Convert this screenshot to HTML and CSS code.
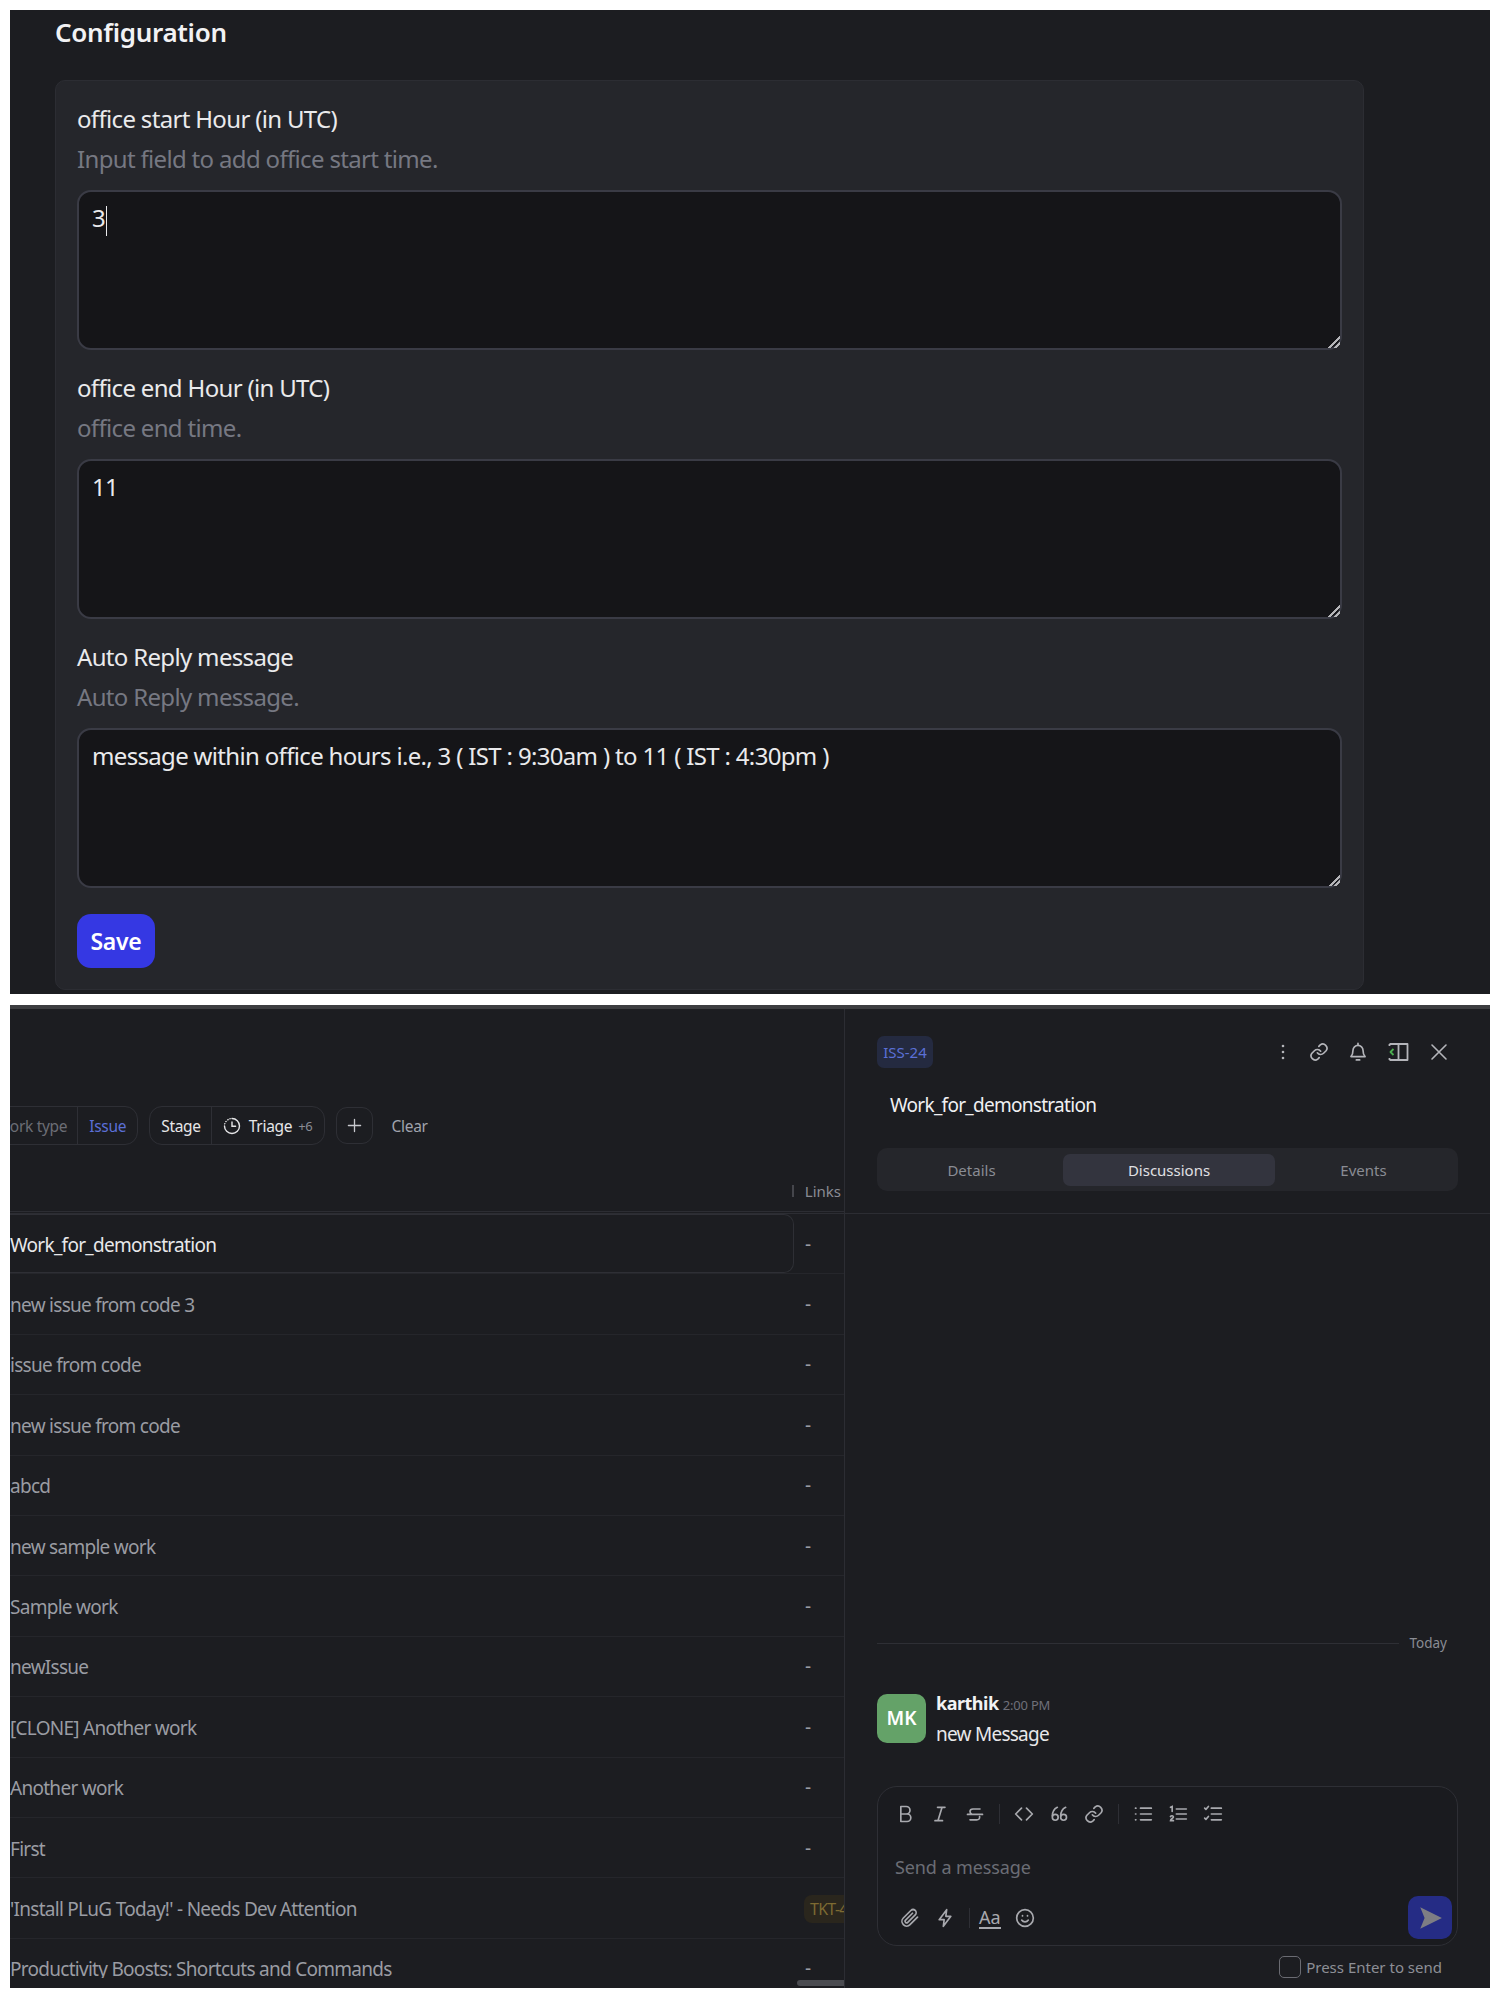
FILE: index.html
```html
<!DOCTYPE html>
<html lang="en">
<head>
    <meta charset="UTF-8">
    <meta name="viewport" content="width=device-width, initial-scale=1.0">
    <title>Configuration</title>
    <link rel="stylesheet" href="styles.css">
</head>
<body>
    <div class="page">
        <section class="config-panel">
            <h1 class="config-title">Configuration</h1>
            <div class="config-card">
                <div class="field">
                    <div class="field-label">office start Hour (in UTC)</div>
                    <div class="field-help">Input field to add office start time.</div>
                    <div class="field-input">3<span class="caret"></span></div>
                </div>
                <div class="field">
                    <div class="field-label">office end Hour (in UTC)</div>
                    <div class="field-help">office end time.</div>
                    <div class="field-input">11</div>
                </div>
                <div class="field">
                    <div class="field-label">Auto Reply message</div>
                    <div class="field-help">Auto Reply message.</div>
                    <div class="field-input">message within office hours i.e., 3 ( IST : 9:30am ) to 11 ( IST : 4:30pm )</div>
                </div>
                <button class="save-button">Save</button>
            </div>
        </section>

        <section class="work-panel">
            <div class="work-list">
                <div class="filter-bar">
                    <div class="filter-pill">
                        <span class="filter-name muted">Work type</span>
                        <span class="filter-value blue">Issue</span>
                    </div>
                    <div class="filter-pill">
                        <span class="filter-name">Stage</span>
                        <span class="filter-value">
                            <svg class="triage-icon" viewBox="0 0 18 18" fill="none" stroke="currentColor" stroke-width="1.4" stroke-linecap="round">
                                <path d="M9 1.5a7.5 7.5 0 1 1-7.5 7.5" />
                                <path d="M1.7 6.9l.1-.3M2.9 4.6l.2-.2M4.8 2.8l.3-.2M6.9 1.8l.3-.1" />
                                <path d="M9 5v4.300h3.600" />
                            </svg>
                            <span>Triage</span>
                            <small>+6</small>
                        </span>
                    </div>
                    <button class="add-filter">
                        <svg viewBox="0 0 16 16" fill="none" stroke="currentColor" stroke-width="1.4" stroke-linecap="round">
                            <path d="M8 1.500v13M1.500 8h13" />
                        </svg>
                    </button>
                    <span class="clear-filter">Clear</span>
                </div>

                <div class="list-header">
                    <span class="resize-bar"></span>
                    <span>Links</span>
                </div>

                <div class="rows">
                    <div class="row row-active"><div class="row-title">Work_for_demonstration</div><div class="row-link">-</div></div>
                    <div class="row"><div class="row-title">new issue from code 3</div><div class="row-link">-</div></div>
                    <div class="row"><div class="row-title">issue from code</div><div class="row-link">-</div></div>
                    <div class="row"><div class="row-title">new issue from code</div><div class="row-link">-</div></div>
                    <div class="row"><div class="row-title">abcd</div><div class="row-link">-</div></div>
                    <div class="row"><div class="row-title">new sample work</div><div class="row-link">-</div></div>
                    <div class="row"><div class="row-title">Sample work</div><div class="row-link">-</div></div>
                    <div class="row"><div class="row-title">newIssue</div><div class="row-link">-</div></div>
                    <div class="row"><div class="row-title">[CLONE] Another work</div><div class="row-link">-</div></div>
                    <div class="row"><div class="row-title">Another work</div><div class="row-link">-</div></div>
                    <div class="row"><div class="row-title">First</div><div class="row-link">-</div></div>
                    <div class="row"><div class="row-title">'Install PLuG Today!' - Needs Dev Attention</div><div class="row-link"><span class="ticket">TKT-4</span></div></div>
                    <div class="row"><div class="row-title">Productivity Boosts: Shortcuts and Commands</div><div class="row-link">-</div></div>
                </div>
                <div class="list-scrollbar"></div>
            </div>

            <div class="detail">
                <div class="detail-head">
                    <div class="detail-top">
                        <span class="issue-badge">ISS-24</span>
                        <div class="detail-actions">
                            <svg class="icon icon-dots" viewBox="0 0 20 20" fill="currentColor"><circle cx="10" cy="4" r="1.300" /><circle cx="10" cy="10" r="1.300" /><circle cx="10" cy="16" r="1.300" /></svg>
                            <svg class="icon" viewBox="0 0 24 24" fill="none" stroke="currentColor" stroke-width="2" stroke-linecap="round" stroke-linejoin="round"><path d="M10 13a5 5 0 0 0 7.500.500l3-3a5 5 0 0 0-7-7l-1.700 1.700" /><path d="M14 11a5 5 0 0 0-7.500-.500l-3 3a5 5 0 0 0 7 7l1.700-1.700" /></svg>
                            <svg class="icon" viewBox="0 0 24 24" fill="none" stroke="currentColor" stroke-width="2" stroke-linecap="round" stroke-linejoin="round"><path d="M6 10a6 6 0 0 1 12 0c0 5 2.500 7.500 2.500 7.500h-17S6 15 6 10" /><path d="M10 21.500h4M12 1.500v2" /></svg>
                            <svg class="icon icon-wide" viewBox="0 0 22 20" fill="none" stroke="currentColor" stroke-width="1.800" stroke-linejoin="round"><path d="M2 2h18v16H2" /><path d="M2 2v2M2 16v2M11 2v16" /><path d="M6 7l-3 3 3 3" stroke="#4caf50" /></svg>
                            <svg class="icon" viewBox="0 0 20 20" fill="none" stroke="currentColor" stroke-width="1.600" stroke-linecap="round"><path d="M3 3l14 14M17 3L3 17" /></svg>
                        </div>
                    </div>
                    <div class="detail-title">Work_for_demonstration</div>
                    <div class="tabs">
                        <span class="tab">Details</span>
                        <span class="tab tab-active">Discussions</span>
                        <span class="tab">Events</span>
                    </div>
                </div>

                <div class="discussion">
                    <div class="day-divider"><span class="day-line"></span><span>Today</span></div>
                    <div class="message">
                        <div class="avatar">MK</div>
                        <div>
                            <div class="message-meta"><strong>karthik</strong> <span>2:00 PM</span></div>
                            <div class="message-text">new Message</div>
                        </div>
                    </div>
                    <div class="composer">
                        <div class="composer-tools">
                            <svg class="tool" viewBox="0 0 24 24" fill="none" stroke="currentColor" stroke-width="2" stroke-linejoin="round"><path d="M7 3h6.500a4.500 4.500 0 0 1 0 9H7zM7 12h7.500a4.500 4.500 0 0 1 0 9H7z" /></svg>
                            <svg class="tool" viewBox="0 0 24 24" fill="none" stroke="currentColor" stroke-width="2" stroke-linecap="round"><path d="M9 4h9M6 20h9M14.500 4l-5 16" /></svg>
                            <svg class="tool" viewBox="0 0 24 24" fill="none" stroke="currentColor" stroke-width="2" stroke-linecap="round"><path d="M18 6H9.500C7 6 6 7.500 6 9s.8 2.500 2 3M3 12.500h18M17.500 15c.5 2.500-1 4-3.500 4H6" /></svg>
                            <span class="tool-sep"></span>
                            <svg class="tool" viewBox="0 0 24 24" fill="none" stroke="currentColor" stroke-width="2" stroke-linecap="round" stroke-linejoin="round"><path d="M9 5l-7 7 7 7M15 5l7 7-7 7" /></svg>
                            <svg class="tool" viewBox="0 0 24 24" fill="none" stroke="currentColor" stroke-width="2" stroke-linecap="round"><path d="M10 4C6 6 4 9 4 14.500" /><circle cx="7.500" cy="16" r="3.500" /><path d="M20 4c-4 2-6 5-6 10.500" /><circle cx="17.500" cy="16" r="3.500" /></svg>
                            <svg class="tool" viewBox="0 0 24 24" fill="none" stroke="currentColor" stroke-width="2" stroke-linecap="round" stroke-linejoin="round"><path d="M10 13a5 5 0 0 0 7.500.500l3-3a5 5 0 0 0-7-7l-1.700 1.700" /><path d="M14 11a5 5 0 0 0-7.500-.500l-3 3a5 5 0 0 0 7 7l1.700-1.700" /></svg>
                            <span class="tool-sep"></span>
                            <svg class="tool" viewBox="0 0 24 24" fill="none" stroke="currentColor" stroke-width="2" stroke-linecap="round"><path d="M9 5h13M9 12h13M9 19h13M3 5h.500M3 12h.500M3 19h.500" /></svg>
                            <svg class="tool" viewBox="0 0 24 24" fill="none" stroke="currentColor" stroke-width="2" stroke-linecap="round"><path d="M10 6h12M10 12h12M10 18h12M3 4l2-1v6M3 15c1-1.500 3.500-1 3.500.500S3 18 3 20h3.500" /></svg>
                            <svg class="tool" viewBox="0 0 24 24" fill="none" stroke="currentColor" stroke-width="2" stroke-linecap="round" stroke-linejoin="round"><path d="M10 5h12M10 12h12M10 19h12M2 5l1.500 1.500L6.500 3M2 17l1.500 1.500 3-3.500" /></svg>
                        </div>
                        <div class="composer-input">Send a message</div>
                        <div class="composer-bottom">
                            <svg class="tool" viewBox="0 0 24 24" fill="none" stroke="currentColor" stroke-width="2" stroke-linecap="round" stroke-linejoin="round"><path d="M21 11l-9 9a5.500 5.500 0 0 1-8-8l9-9a3.700 3.700 0 0 1 5.300 5.200l-9 9a1.800 1.800 0 0 1-2.600-2.600l8.300-8.300" /></svg>
                            <svg class="tool" viewBox="0 0 24 24" fill="none" stroke="currentColor" stroke-width="2" stroke-linejoin="round"><path d="M14 2L5 14h6l-1 8 9-12h-6z" /></svg>
                            <span class="tool-sep"></span>
                            <span class="format-text">Aa</span>
                            <svg class="tool tool-smile" viewBox="0 0 24 24" fill="none" stroke="currentColor" stroke-width="2" stroke-linecap="round"><circle cx="12" cy="12" r="10" /><path d="M8 14.500c1 1.500 2.500 2.200 4 2.200s3-.7 4-2.200M9 9v.5M15 9v.5" /></svg>
                            <button class="send-button">
                                <svg viewBox="0 0 24 24" fill="currentColor"><path d="M3 2l20 10L3 22l4-10z" /></svg>
                            </button>
                        </div>
                    </div>
                    <label class="enter-option"><span class="checkbox"></span>Press Enter to send</label>
                </div>
            </div>
        </section>
    </div>
</body>
</html>
```

FILE: styles.css
```css
body {
    margin: 0;
    background-color: #fff;
    font-family: "Noto Sans", Arial, sans-serif;
}

.page {
    padding: 10px;
    display: flex;
    flex-direction: column;
    gap: 11px;
}

.config-panel {
    height: 984px;
    box-sizing: border-box;
    padding: 0 126px 4px 45px;
    background-color: #1c1d21;
    color: #eaeaec;
    display: flex;
    flex-direction: column;
}

.config-title {
    margin: 6px 0 0;
    height: 64px;
    line-height: 32px;
    font-size: 26px;
    font-weight: 600;
    letter-spacing: -0.3px;
    color: #f2f2f4;
}

.config-card {
    flex: 1;
    box-sizing: border-box;
    padding: 22px 21px 0;
    background-color: #25262b;
    border: 1px solid #2c2d33;
    border-radius: 10px;
}

.field {
    height: 269px;
    font-size: 24px;
    letter-spacing: -0.67px;
}

.field-label {
    height: 40px;
    line-height: 31px;
}

.field-help {
    height: 47px;
    line-height: 32px;
    color: #767882;
}

.field-input {
    height: 160px;
    box-sizing: border-box;
    padding: 9px 13px;
    line-height: 34px;
    color-scheme: dark;
    overflow: auto;
    resize: vertical;
    background-color: #151518;
    border: 2px solid #3a3b45;
    border-radius: 14px;
}

.field-input::-webkit-resizer {
    background: linear-gradient(135deg, transparent 60%, #b5b5b8 60%, #b5b5b8 70%, transparent 70%, transparent 78%, #b5b5b8 78%, #b5b5b8 88%, transparent 88%);
}

.caret {
    display: inline-block;
    width: 1px;
    height: 30px;
    margin-left: 1px;
    vertical-align: middle;
    background-color: #eaeaec;
}

.save-button {
    display: block;
    width: 78px;
    height: 54px;
    padding: 0;
    margin-top: 4px;
    background-color: #3538e3;
    color: #fff;
    border: none;
    border-radius: 14px;
    font-family: inherit;
    font-size: 23px;
    font-weight: 600;
    letter-spacing: -0.3px;
}

.work-panel {
    height: 983px;
    box-sizing: border-box;
    display: flex;
    background-color: #1c1d21;
    border-top: 4px solid #3c3d40;
}

.work-list {
    position: relative;
    width: 834px;
    flex-shrink: 0;
    overflow: hidden;
    border-right: 1px solid #2c2d33;
}

.filter-bar {
    display: flex;
    align-items: center;
    height: 39px;
    margin: 97px 0 0 -26px;
    font-size: 15.5px;
    letter-spacing: -0.3px;
}

.filter-pill {
    display: flex;
    height: 39px;
    box-sizing: border-box;
    margin-right: 11px;
    border: 1px solid #2e2f35;
    border-radius: 13px;
    color: #e6e6e8;
}

.filter-name,
.filter-value {
    display: flex;
    align-items: center;
    padding: 0 11px;
    white-space: nowrap;
}

.filter-name {
    border-right: 1px solid #2e2f35;
    padding-right: 10px;
}

.filter-value small {
    margin-left: 6px;
    font-size: 13px;
    color: #8a8c94;
}

.muted {
    color: #6b6d75;
}

.filter-value.blue {
    color: #5b6fd6;
}

.triage-icon {
    width: 18px;
    height: 18px;
    margin-right: 8px;
}

.add-filter {
    width: 37px;
    height: 37px;
    padding: 0;
    background: none;
    color: #c8c9ce;
    border: 1px solid #2e2f35;
    border-radius: 11px;
}

.add-filter svg {
    display: block;
    width: 15px;
    height: 15px;
    margin: auto;
}

.clear-filter {
    margin-left: 19px;
    color: #a0a3ad;
}

.list-header {
    display: flex;
    align-items: center;
    justify-content: flex-end;
    height: 69px;
    box-sizing: border-box;
    padding: 26px 3px 0 0;
    font-size: 15px;
    color: #8a8c94;
    border-bottom: 3px double #2c2d33;
}

.resize-bar {
    width: 2px;
    height: 12px;
    margin-right: 11px;
    background-color: #45464c;
}

.rows {
    height: 764px;
    overflow: hidden;
}

.row {
    display: flex;
    align-items: center;
    height: 60.4px;
    box-sizing: border-box;
    font-size: 19px;
    letter-spacing: -0.72px;
    color: #9a9ca3;
    border-bottom: 1px solid #25262b;
    white-space: nowrap;
}

.row-title {
    flex: 1;
    height: 100%;
    display: flex;
    align-items: center;
    padding-top: 2px;
    box-sizing: border-box;
}

.row-active .row-title {
    color: #e8e8ea;
    border: 1px solid #2e2f35;
    border-left: none;
    border-radius: 0 10px 10px 0;
}

.row-link {
    width: 50px;
    box-sizing: border-box;
    padding-left: 11px;
    overflow: hidden;
}

.ticket {
    display: inline-block;
    margin: 2px 0 0 -1px;
    padding: 3px 6px;
    font-size: 16px;
    color: #7d6a32;
    background-color: #2a261d;
    border-radius: 8px;
}

.list-scrollbar {
    position: absolute;
    right: 0;
    bottom: 2px;
    width: 47px;
    height: 6px;
    background-color: #4a4b50;
    border-radius: 3px 0 0 3px;
}

.detail {
    flex: 1;
    display: flex;
    flex-direction: column;
    min-width: 0;
    color: #e8e8ea;
}

.detail-head {
    padding: 27px 32px 22px;
    border-bottom: 1px solid #2c2d33;
}

.detail-top {
    display: flex;
    align-items: center;
    justify-content: space-between;
    height: 32px;
}

.issue-badge {
    width: 56px;
    height: 32px;
    line-height: 32px;
    text-align: center;
    font-size: 15px;
    color: #5b70d6;
    background-color: #242a40;
    border-radius: 7px;
}

.detail-actions {
    display: flex;
    align-items: center;
    gap: 19px;
    padding-right: 9px;
    color: #b4b5ba;
}

.icon {
    width: 20px;
    height: 20px;
}

.icon-dots {
    margin-right: -3px;
}

.icon-wide {
    width: 23px;
}

.detail-title {
    height: 80px;
    padding-left: 13px;
    line-height: 74px;
    font-size: 19px;
    letter-spacing: -0.72px;
    color: #f0f0f2;
}

.tabs {
    display: grid;
    grid-template-columns: 185px 213px 1fr;
    align-items: center;
    height: 43px;
    font-size: 15px;
    color: #8a8c94;
    background-color: #25262b;
    border-radius: 10px;
}

.tab {
    text-align: center;
}

.tab:first-child {
    padding-left: 4px;
}

.tab:last-child {
    padding-right: 6px;
}

.tab-active {
    height: 32px;
    line-height: 32px;
    margin-left: 1px;
    color: #e0e0e4;
    background-color: #33343e;
    border-radius: 7px;
}

.discussion {
    flex: 1;
    display: flex;
    flex-direction: column;
    justify-content: flex-end;
    padding: 0 32px 10px;
}

.day-divider {
    display: flex;
    align-items: center;
    gap: 11px;
    padding-right: 11px;
    font-size: 13.5px;
    color: #8a8c94;
}

.day-line {
    flex: 1;
    height: 1px;
    background-color: #2e2f35;
}

.message {
    display: flex;
    gap: 10px;
    margin-top: 42px;
}

.avatar {
    width: 49px;
    height: 49px;
    line-height: 49px;
    text-align: center;
    font-size: 19px;
    font-weight: 600;
    color: #fff;
    background-color: #64a268;
    border-radius: 10px;
}

.message-meta {
    height: 28px;
    margin-top: -5px;
    line-height: 28px;
}

.message-meta strong {
    font-size: 18px;
    letter-spacing: -0.5px;
    color: #f2f2f4;
}

.message-meta span {
    font-size: 13px;
    letter-spacing: -0.2px;
    color: #6f7079;
}

.message-text {
    margin-top: 3px;
    line-height: 28px;
    font-size: 19px;
    letter-spacing: -0.75px;
}

.composer {
    height: 160px;
    box-sizing: border-box;
    margin-top: 38px;
    padding: 15px 5px 4px 17px;
    background-color: #1a1b1f;
    border: 1px solid #2e2f35;
    border-radius: 20px;
    color: #a8a9ae;
    display: flex;
    flex-direction: column;
}

.composer-tools,
.composer-bottom {
    display: flex;
    align-items: center;
}

.composer-tools {
    height: 24px;
    gap: 15px;
}

.tool {
    width: 20px;
    height: 20px;
    flex-shrink: 0;
}

.tool-sep {
    width: 1px;
    height: 20px;
    margin: 0 -1px;
    background-color: #2e2f35;
}

.composer-input {
    height: 70px;
    line-height: 82px;
    font-size: 18px;
    letter-spacing: -0.1px;
    color: #6b6d75;
}

.composer-bottom {
    gap: 15px;
    padding-left: 5px;
}

.format-text {
    margin-left: -5px;
    font-size: 18px;
    line-height: 20px;
    border-bottom: 2px solid #a8a9ae;
}

.tool-smile {
    margin-left: -1px;
}

.send-button {
    width: 44px;
    height: 43px;
    margin-left: auto;
    padding: 9px;
    background-color: #252c85;
    color: #7e7e84;
    border: none;
    border-radius: 10px;
}

.send-button svg {
    display: block;
}

.enter-option {
    display: flex;
    align-items: center;
    justify-content: flex-end;
    gap: 5px;
    margin-top: 10px;
    padding-right: 16px;
    font-size: 15px;
    color: #8d8f96;
}

.checkbox {
    width: 20px;
    height: 20px;
    border: 1px solid #6a6b72;
    border-radius: 5px;
}
```
